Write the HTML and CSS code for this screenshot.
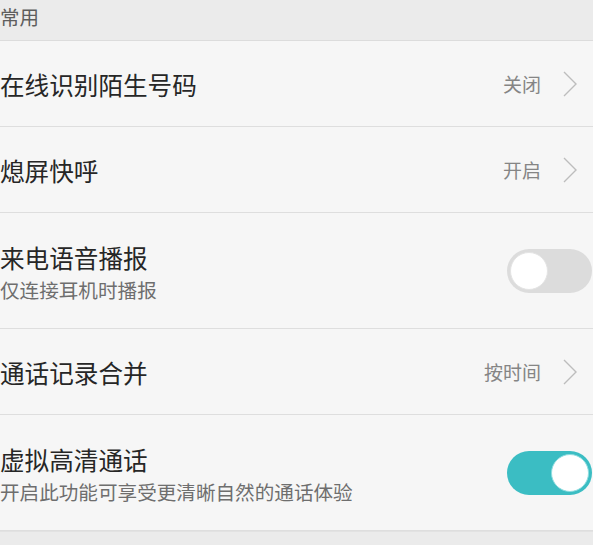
FILE: index.html
```html
<!DOCTYPE html>
<html lang="zh-CN">
<head>
<meta charset="utf-8">
<title>常用</title>
<link rel="stylesheet" href="styles.css">
</head>
<body>
<div class="header">常用</div>
<div class="list">
  <div class="row">
    <div class="text"><div class="title">在线识别陌生号码</div></div>
    <div class="value">关闭</div>
    <svg class="chev" width="14" height="26" viewBox="0 0 14 26"><path d="M1 1 L13 13 L1 25" fill="none" stroke="#bdbdbd" stroke-width="1.4"/></svg>
  </div>
  <div class="row">
    <div class="text"><div class="title">熄屏快呼</div></div>
    <div class="value">开启</div>
    <svg class="chev" width="14" height="26" viewBox="0 0 14 26"><path d="M1 1 L13 13 L1 25" fill="none" stroke="#bdbdbd" stroke-width="1.4"/></svg>
  </div>
  <div class="row tall">
    <div class="text"><div class="title">来电语音播报</div><div class="sub">仅连接耳机时播报</div></div>
    <div class="toggle off"><span class="knob"></span></div>
  </div>
  <div class="row">
    <div class="text"><div class="title">通话记录合并</div></div>
    <div class="value">按时间</div>
    <svg class="chev" width="14" height="26" viewBox="0 0 14 26"><path d="M1 1 L13 13 L1 25" fill="none" stroke="#bdbdbd" stroke-width="1.4"/></svg>
  </div>
  <div class="row tall">
    <div class="text"><div class="title">虚拟高清通话</div><div class="sub">开启此功能可享受更清晰自然的通话体验</div></div>
    <div class="toggle on"><span class="knob"></span></div>
  </div>
</div>
<div class="footer"></div>
</body>
</html>
```
FILE: styles.css
```css
html, body {
  margin: 0;
  padding: 0;
  background: #f6f6f6;
  font-family: "Noto Sans CJK SC", "Noto Sans", sans-serif;
  overflow: hidden;
}
.header {
  height: 40px;
  background: #ebebeb;
  border-bottom: 1px solid #dcdcdc;
  color: #5e5e5e;
  font-size: 19.5px;
  line-height: 34px;
}
.list {
  background: #f6f6f6;
}
.row {
  display: flex;
  align-items: center;
  height: 85px;
  border-bottom: 1px solid #dedede;
  padding-right: 16px;
}
.row.tall {
  height: 115px;
  padding-right: 1px;
}
.text {
  flex: 1;
  display: flex;
  flex-direction: column;
  gap: 5px;
}
.row.tall .text {
  padding-top: 4px;
}
.title {
  font-size: 24.6px;
  line-height: 30px;
  color: #262626;
}
.sub {
  font-size: 19.6px;
  line-height: 26px;
  color: #6e6e6e;
}
.value {
  font-size: 19px;
  color: #858585;
  margin-right: 22px;
}
.chev {
  display: block;
}
.toggle {
  width: 85px;
  height: 44px;
  border-radius: 22px;
  box-sizing: border-box;
  display: flex;
  align-items: center;
  padding: 0 3px;
}
.toggle.off {
  background: #dcdcdc;
  justify-content: flex-start;
}
.toggle.on {
  background: #3bbdc3;
  justify-content: flex-end;
}
.knob {
  width: 38px;
  height: 38px;
  border-radius: 50%;
  background: #fff;
  box-sizing: border-box;
  border: 1px solid #e4e4e4;
}
.toggle.on .knob {
  border-color: #8fdde0;
}
.footer {
  height: 40px;
  background: #ebebeb;
  border-top: 1px solid #e2e2e2;
}
```
